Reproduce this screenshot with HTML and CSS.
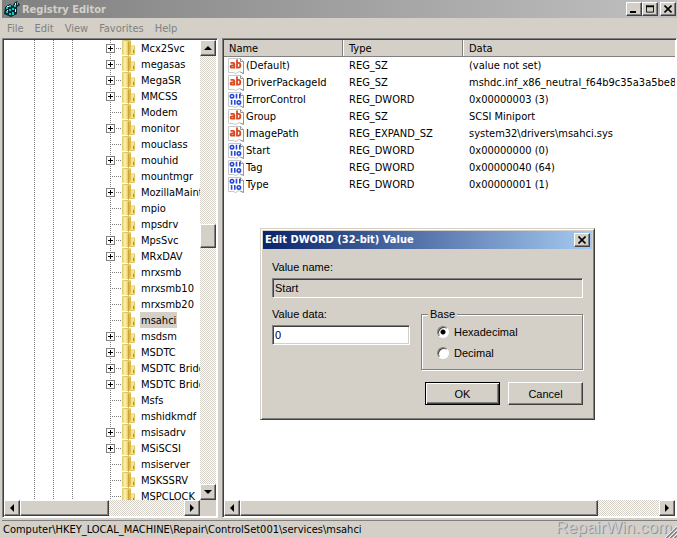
FILE: index.html
```
<!DOCTYPE html>
<html lang="en">
<head>
    <meta charset="UTF-8">
    <title>Registry Editor</title>
    <link rel="stylesheet" href="styles.css">
</head>
<body>
    <!-- shared icons -->
    <svg class="sprite" aria-hidden="true">
        <defs>
            <linearGradient id="gold" x1="0" x2="1" y1="0" y2="0">
                <stop offset="0" stop-color="#e3c65a"/>
                <stop offset="0.5" stop-color="#fbf5bc"/>
                <stop offset="1" stop-color="#e6cb60"/>
            </linearGradient>
        </defs>
        <symbol id="folder" viewBox="0 0 14 16">
            <path d="M0 1 L1 0 H8 L9 1 V5 H12 L13 6 V14 L12 15 H1 L0 14Z" fill="#e2c65c"/>
            <path d="M0 1 H6 V15 H1 L0 14Z" fill="url(#gold)"/>
            <path d="M6 2 L9 1 V12 L6 16Z" fill="#dcb94c"/>
            <path d="M6 2 H7 V15 L6 16Z" fill="#c9a23a"/>
            <path d="M9 5 H12 V14 H8 L9 12Z" fill="#f3e48f"/>
            <path d="M11 10 H12 V13 H11Z" fill="#4aa3b8"/>
        </symbol>
        <symbol id="page" viewBox="0 0 16 16">
            <path d="M0.5 0.5 H12.5 L15.5 3.5 V15.5 L13 14.5 L11 13.5 L8 15.5 L5 14.5 H0.5Z" fill="#fff" stroke="#c8c8c8"/>
            <path d="M12.5 0.5 V3.5 H15.5 V15.5 L12.5 14" fill="none" stroke="#949494"/>
        </symbol>
        <symbol id="string" viewBox="0 0 16 16">
            <use href="#page"/>
            <g fill="none" stroke="#d8481f" stroke-width="1.8">
                <path d="M2.5 4.9 H5 Q6.3 4.9 6.3 6.2 V10.5 M6 7.4 H4 Q2.6 7.4 2.6 8.6 T4 9.6 H6"/>
                <path d="M9 1.5 V10.5 M9 4.9 H10.6 Q12.3 4.9 12.3 7.2 T10.6 9.6 H9"/>
            </g>
        </symbol>
        <symbol id="dword" viewBox="0 0 16 16">
            <use href="#page"/>
            <g fill="none" stroke="#2447d8" stroke-width="1.6">
                <circle cx="4" cy="4.2" r="1.7"/>
                <path d="M8.5 1.8 V6.6 M11.8 1.8 V6.6"/>
                <path d="M3.6 8 V12.8 M6.8 8 V12.8"/>
                <circle cx="10.9" cy="10.4" r="1.7"/>
            </g>
        </symbol>
        <symbol id="up" viewBox="0 0 8 8"><path d="M4 2 L8 6 H0Z"/></symbol>
        <symbol id="down" viewBox="0 0 8 8"><path d="M0 2 H8 L4 6Z"/></symbol>
        <symbol id="left" viewBox="0 0 8 8"><path d="M6 0 V8 L2 4Z"/></symbol>
        <symbol id="right" viewBox="0 0 8 8"><path d="M2 0 V8 L6 4Z"/></symbol>
        <symbol id="close" viewBox="0 0 8 8"><path d="M0.5 0.5 L7.5 7.5 M7.5 0.5 L0.5 7.5" stroke="#000" stroke-width="1.6"/></symbol>
    </svg>

    <div class="window">
        <header class="titlebar">
            <svg class="app-icon" viewBox="0 0 16 16">
                <path d="M1 6 L6 3 L9 5 L10 2 L13 0 L16 4 L13 6 L13 13 L7 16 L0 13Z" fill="#062c30"/>
                <path d="M2 6h2v2H2z M5 4h2v2H5z M5 8h2v2H5z M2 10h2v2H2z M5 12h2v2H5z M8 11h2v3H8z M8 7h2v2H8z M10 4h2v2h-2z M13 1h1v3h-1z" fill="#19c4c8"/>
                <path d="M3 5h2v1H3z M11 2h1v2h-1z M3 9h1v1H3z M11 8h1v3h-1z" fill="#c8ffff"/>
            </svg>
            <h1>Registry Editor</h1>
            <button class="caption-btn" aria-label="Minimize"><svg viewBox="0 0 8 8"><path d="M0 6h6v2H0z"/></svg></button>
            <button class="caption-btn" aria-label="Maximize"><svg viewBox="0 0 9 8"><path d="M0.5 0V7.5H8.5V0M0 1H9" fill="none" stroke="#000"/><path d="M0 0h9v2H0z"/></svg></button>
            <button class="caption-btn last" aria-label="Close"><svg><use href="#close"/></svg></button>
        </header>

        <nav class="menubar">
            <a href="#">File</a>
            <a href="#">Edit</a>
            <a href="#">View</a>
            <a href="#">Favorites</a>
            <a href="#">Help</a>
        </nav>

        <main class="panes">
            <section class="pane tree-pane">
                <div class="tree-body">
                    <ul class="tree" id="tree"></ul>
                    <div class="scroll vertical">
                        <button class="arrow" aria-label="Scroll up"><svg><use href="#up"/></svg></button>
                        <div class="before"></div>
                        <div class="thumb"></div>
                        <div class="after"></div>
                        <button class="arrow" aria-label="Scroll down"><svg><use href="#down"/></svg></button>
                    </div>
                </div>
                <div class="scroll tree-scroll">
                    <button class="arrow" aria-label="Scroll left"><svg><use href="#left"/></svg></button>
                    <div class="thumb"></div>
                    <div class="after"></div>
                    <button class="arrow" aria-label="Scroll right"><svg><use href="#right"/></svg></button>
                </div>
            </section>

            <section class="pane value-pane">
                <div class="value-body">
                    <table class="values">
                        <thead>
                            <tr><th class="col-name">Name</th><th class="col-type">Type</th><th>Data</th></tr>
                        </thead>
                        <tbody>
                            <tr><td><svg><use href="#string"/></svg>(Default)</td><td>REG_SZ</td><td>(value not set)</td></tr>
                            <tr><td><svg><use href="#string"/></svg>DriverPackageId</td><td>REG_SZ</td><td>mshdc.inf_x86_neutral_f64b9c35a3a5be81</td></tr>
                            <tr><td><svg><use href="#dword"/></svg>ErrorControl</td><td>REG_DWORD</td><td>0x00000003 (3)</td></tr>
                            <tr><td><svg><use href="#string"/></svg>Group</td><td>REG_SZ</td><td>SCSI Miniport</td></tr>
                            <tr><td><svg><use href="#string"/></svg>ImagePath</td><td>REG_EXPAND_SZ</td><td>system32\drivers\msahci.sys</td></tr>
                            <tr><td><svg><use href="#dword"/></svg>Start</td><td>REG_DWORD</td><td>0x00000000 (0)</td></tr>
                            <tr><td><svg><use href="#dword"/></svg>Tag</td><td>REG_DWORD</td><td>0x00000040 (64)</td></tr>
                            <tr><td><svg><use href="#dword"/></svg>Type</td><td>REG_DWORD</td><td>0x00000001 (1)</td></tr>
                        </tbody>
                    </table>
                </div>
                <div class="scroll value-scroll">
                    <button class="arrow" aria-label="Scroll left"><svg><use href="#left"/></svg></button>
                    <div class="thumb"></div>
                    <div class="after"></div>
                    <button class="arrow" aria-label="Scroll right"><svg><use href="#right"/></svg></button>
                </div>
            </section>
        </main>

        <footer class="statusbar">
            <span class="path">Computer\HKEY_LOCAL_MACHINE\Repair\ControlSet001\services\msahci</span>
            <span class="brand">RepairWin.com</span>
            <svg class="grip" viewBox="0 0 12 12">
                <path d="M0 12 L12 0 M4 12 L12 4 M8 12 L12 8" stroke="#fff"/>
                <path d="M1.5 12 L12 1.5 M5.5 12 L12 5.5 M9.5 12 L12 9.5" stroke="#808080" stroke-width="1.5"/>
            </svg>
        </footer>
    </div>

    <form class="dialog" role="dialog" aria-labelledby="dialog-title">
        <div class="dialog-title">
            <h2 id="dialog-title">Edit DWORD (32-bit) Value</h2>
            <button type="button" class="caption-btn last" aria-label="Close"><svg><use href="#close"/></svg></button>
        </div>
        <div class="dialog-body">
            <div class="field">
                <label for="value-name">Value name:</label>
                <input type="text" id="value-name" value="Start" readonly>
            </div>
            <div class="dialog-row">
                <div class="field data">
                    <label for="value-data">Value data:</label>
                    <input type="text" id="value-data" value="0">
                </div>
                <fieldset>
                    <legend>Base</legend>
                    <label><input type="radio" name="base" value="hex" checked>Hexadecimal</label>
                    <label><input type="radio" name="base" value="dec">Decimal</label>
                </fieldset>
            </div>
            <div class="actions">
                <button type="button" class="btn default">OK</button>
                <button type="button" class="btn">Cancel</button>
            </div>
        </div>
    </form>

    <script>
        // a leading + marks a key that has subkeys
        const keys = [
            '+Mcx2Svc', '+megasas', '+MegaSR', '+MMCSS', 'Modem', '+monitor', 'mouclass',
            '+mouhid', 'mountmgr', '+MozillaMainte', 'mpio', 'mpsdrv', '+MpsSvc',
            '+MRxDAV', 'mrxsmb', 'mrxsmb10', 'mrxsmb20', 'msahci', '+msdsm', '+MSDTC',
            '+MSDTC Bridg', '+MSDTC Bridg', 'Msfs', 'mshidkmdf',
            '+msisadrv', '+MSiSCSI', 'msiserver', 'MSKSSRV', 'MSPCLOCK'
        ];

        document.getElementById('tree').innerHTML = keys.map(key => {
            const name = key.replace('+', '');
            const box = key[0] === '+' ? '<button class="expander" aria-label="Expand ' + name + '"></button>' : '';
            const cls = name === 'msahci' ? 'key selected' : 'key';
            return `<li><span class="branch">${box}</span><svg class="folder"><use href="#folder"/></svg><span class="${cls}">${name}</span></li>`;
        }).join('');
    </script>
</body>
</html>
```
FILE: styles.css
```
* {
    box-sizing: border-box;
}

body {
    margin: 0;
    background: #d4d0c8;
    color: #000;
    font: 11px/16px "DejaVu Sans Condensed", "DejaVu Sans", sans-serif;
    overflow: hidden;
}

h1, h2 {
    margin: 0;
    flex: 1;
    color: #fff;
    font-size: 11px;
    font-weight: bold;
}

button {
    padding: 0;
    background: #d4d0c8;
    border: 1px solid;
    border-color: #fff #404040 #404040 #fff;
    box-shadow: inset -1px -1px #808080;
    border-radius: 0;
    font: inherit;
    color: #000;
}

.sprite {
    position: absolute;
    width: 0;
    height: 0;
}

.window {
    height: 100vh;
    padding-left: 2px;
    display: flex;
    flex-direction: column;
}

/* title bar and menu */
.titlebar {
    flex: none;
    height: 18px;
    display: flex;
    align-items: center;
    padding-right: 1px;
    background: linear-gradient(to right, #808080, #c0c0c0);
}

.titlebar h1 {
    padding-top: 1px;
    color: #d4d0c8;
}

.app-icon {
    width: 16px;
    height: 16px;
    margin: 0 2px;
}

.caption-btn {
    width: 16px;
    height: 14px;
    display: flex;
    align-items: center;
    justify-content: center;
}

.caption-btn.last {
    margin-left: 2px;
}

.caption-btn svg,
.arrow svg {
    width: 8px;
    height: 8px;
    flex: none;
}

.menubar {
    flex: none;
    height: 20px;
    display: flex;
    align-items: center;
    gap: 11px;
    padding: 1px 0 0 5px;
}

.menubar a {
    color: #808080;
    text-decoration: none;
}

/* panes */
.panes {
    flex: 1;
    min-height: 0;
    display: flex;
    gap: 4px;
}

.pane {
    display: flex;
    flex-direction: column;
    min-width: 0;
    background: #fff;
    border: 1px solid;
    border-color: #808080 #fff #fff #808080;
    box-shadow: inset 1px 1px #404040;
    padding: 1px;
}

.tree-pane {
    flex: none;
    width: 216px;
}

.value-pane {
    flex: 1;
}

.tree-body {
    flex: 1;
    min-height: 0;
    display: flex;
}

.tree {
    flex: 1;
    min-width: 0;
    margin: 0;
    padding: 0;
    list-style: none;
    overflow: hidden;
    background:
        repeating-linear-gradient(#808080 0 1px, #fff 1px 2px) 30px 0 / 1px 100% no-repeat,
        repeating-linear-gradient(#808080 0 1px, #fff 1px 2px) 49px 0 / 1px 100% no-repeat,
        repeating-linear-gradient(#808080 0 1px, #fff 1px 2px) 68px 0 / 1px 100% no-repeat,
        repeating-linear-gradient(#808080 0 1px, #fff 1px 2px) 106px 0 / 1px 100% no-repeat;
}

.tree li {
    height: 16px;
    display: flex;
    align-items: center;
    padding-left: 102px;
    white-space: nowrap;
}

.branch {
    flex: none;
    width: 16px;
    height: 9px;
    background: repeating-linear-gradient(to right, #808080 0 1px, #fff 1px 2px) 4px 4px / 12px 1px no-repeat;
}

.expander {
    display: block;
    width: 9px;
    height: 9px;
    border: 1px solid #808080;
    box-shadow: none;
    background:
        linear-gradient(#000, #000) center / 5px 1px no-repeat,
        linear-gradient(#000, #000) center / 1px 5px no-repeat,
        #fff;
}

.folder {
    flex: none;
    width: 14px;
    height: 16px;
    margin-right: 4px;
}

.key {
    padding: 2px 1px 0;
    line-height: 14px;
}

.selected {
    background: #d4d0c8;
}

/* scroll bars */
.scroll {
    flex: none;
    display: flex;
    height: 16px;
    background: repeating-conic-gradient(#fff 0 25%, #d4d0c8 0 50%) 0 0 / 2px 2px;
}

.scroll.vertical {
    flex-direction: column;
    width: 16px;
    height: auto;
}

.arrow {
    flex: none;
    width: 16px;
    height: 16px;
    display: flex;
    align-items: center;
    justify-content: center;
}

.thumb {
    background: #d4d0c8;
    border: 1px solid;
    border-color: #fff #404040 #404040 #fff;
    box-shadow: inset -1px -1px #808080;
}

.vertical .thumb {
    height: 24px;
}

.vertical .before {
    flex: 168;
}

.vertical .after {
    flex: 236;
}

.tree-scroll {
    border-right: 16px solid #d4d0c8;
}

.tree-scroll .thumb {
    flex: 88;
}

.tree-scroll .after {
    flex: 76;
}

.value-scroll .thumb {
    flex: 358;
}

.value-scroll .after {
    flex: 61;
}

/* value list */
.value-body {
    flex: 1;
    min-height: 0;
    overflow: hidden;
}

.values {
    width: 100%;
    table-layout: fixed;
    border-collapse: separate;
    border-spacing: 0;
}

.values th {
    height: 17px;
    padding: 2px 6px 0;
    background: #d4d0c8;
    border-right: 1px solid #808080;
    border-bottom: 1px solid #808080;
    box-shadow: inset 1px 0 #fff;
    font-weight: normal;
    line-height: 14px;
    text-align: left;
}

.values .col-name {
    width: 119px;
    padding-left: 5px;
    box-shadow: none;
}

.values .col-type {
    width: 120px;
}

.values th:last-child {
    border-right: none;
}

.values td {
    height: 17px;
    padding: 1px 0 0 6px;
    line-height: 16px;
    white-space: nowrap;
    overflow: hidden;
}

.values td:first-child {
    padding-left: 4px;
}

.values svg {
    width: 16px;
    height: 16px;
    margin-right: 2px;
    vertical-align: top;
}

/* status bar */
.statusbar {
    flex: none;
    height: 18px;
    margin-top: 2px;
    display: flex;
    align-items: center;
    border-top: 1px solid #808080;
    padding-left: 1px;
}

.path {
    flex: 1;
}

.brand {
    color: #d0cfcf;
    font: 17px/14px "Liberation Sans", Arial, sans-serif;
    text-shadow: 1px 1px #8c929c;
    align-self: flex-start;
}

.grip {
    width: 12px;
    height: 12px;
    align-self: flex-end;
    margin-left: -7px;
}

/* edit dialog */
.dialog {
    position: absolute;
    left: 260px;
    top: 228px;
    width: 335px;
    padding: 2px;
    background: #d4d0c8;
    border: 1px solid;
    border-color: #d4d0c8 #404040 #404040 #d4d0c8;
    box-shadow: inset 1px 1px #fff, inset -1px -1px #808080;
    font: 11px/14px "Liberation Sans", Arial, sans-serif;
}

.dialog-title {
    height: 18px;
    display: flex;
    align-items: center;
    padding: 0 2px;
    background: linear-gradient(to right, #0a246a, #a6caf0);
    font-family: "DejaVu Sans Condensed", "DejaVu Sans", sans-serif;
}

.dialog-body {
    padding: 11px 9px 12px;
}

.field {
    display: flex;
    flex-direction: column;
    gap: 4px;
}

.field input {
    width: 100%;
    height: 20px;
    padding: 0 2px;
    background: #fff;
    border: 1px solid;
    border-color: #808080 #fff #fff #808080;
    border-radius: 0;
    box-shadow: inset 1px 1px #404040, inset -1px -1px #d4d0c8;
    outline: none;
    font: inherit;
    color: #000;
}

.field input[readonly] {
    background: #d4d0c8;
}

.dialog-row {
    display: flex;
    justify-content: space-between;
    align-items: flex-start;
    margin-top: 9px;
}

.data {
    width: 138px;
}

fieldset {
    width: 162px;
    height: 63px;
    margin: 0;
    padding: 4px 14px 0;
    border: 1px solid #808080;
    box-shadow: 1px 1px #fff, inset 1px 1px #fff;
}

legend {
    margin-left: -8px;
    padding: 0 2px;
    background: #d4d0c8;
}

fieldset label {
    display: flex;
    align-items: center;
    height: 14px;
    margin-bottom: 7px;
}

fieldset input {
    appearance: none;
    width: 12px;
    height: 12px;
    margin: 0 5px 0 1px;
    border: 1px solid;
    border-color: #808080 #fff #fff #808080;
    border-radius: 50%;
    background: #fff;
    box-shadow: inset 1px 1px #404040;
}

fieldset input:checked {
    background: radial-gradient(circle, #000 2px, #fff 3px);
}

.actions {
    display: flex;
    justify-content: flex-end;
    gap: 8px;
    margin-top: 12px;
}

.btn {
    width: 75px;
    height: 23px;
}

.btn.default {
    border-color: #000;
    box-shadow: inset 1px 1px #fff, inset -1px -1px #404040, inset -2px -2px #808080;
}
```
